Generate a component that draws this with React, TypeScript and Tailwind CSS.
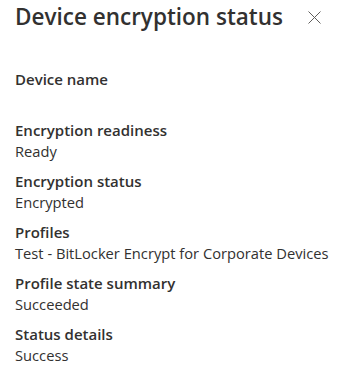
import React from "react";

const rows: [string, string][] = [
  ["Device name", ""],
  ["Encryption readiness", "Ready"],
  ["Encryption status", "Encrypted"],
  ["Profiles", "Test - BitLocker Encrypt for Corporate Devices"],
  ["Profile state summary", "Succeeded"],
  ["Status details", "Success"],
];

export default function App() {
  return (
    <div
      className="w-[347px] h-[372px] bg-white text-[#323130] overflow-hidden"
      style={{ fontFamily: '"Open Sans", "Noto Sans", sans-serif' }}
    >
      <div className="flex items-start justify-between pl-[15px] pr-[26px] pt-[1px]">
        <h1 className="text-[22.5px] leading-[32px] font-semibold">
          Device encryption status
        </h1>
        <svg width="13" height="13" viewBox="0 0 13 13" className="mt-[10px]">
          <path d="M0.5 0.5 L12.5 12.5 M12.5 0.5 L0.5 12.5" stroke="#605e5c" strokeWidth="1" />
        </svg>
      </div>
      <div className="flex flex-col gap-[9px] pl-[15px] pt-[35px]">
        {rows.map(([label, value]) => (
          <div key={label} className="flex flex-col">
            <div className="text-[15px] leading-[22px] font-semibold">{label}</div>
            <div className="text-[14.7px] leading-[20px] min-h-[20px]">{value}</div>
          </div>
        ))}
      </div>
    </div>
  );
}
